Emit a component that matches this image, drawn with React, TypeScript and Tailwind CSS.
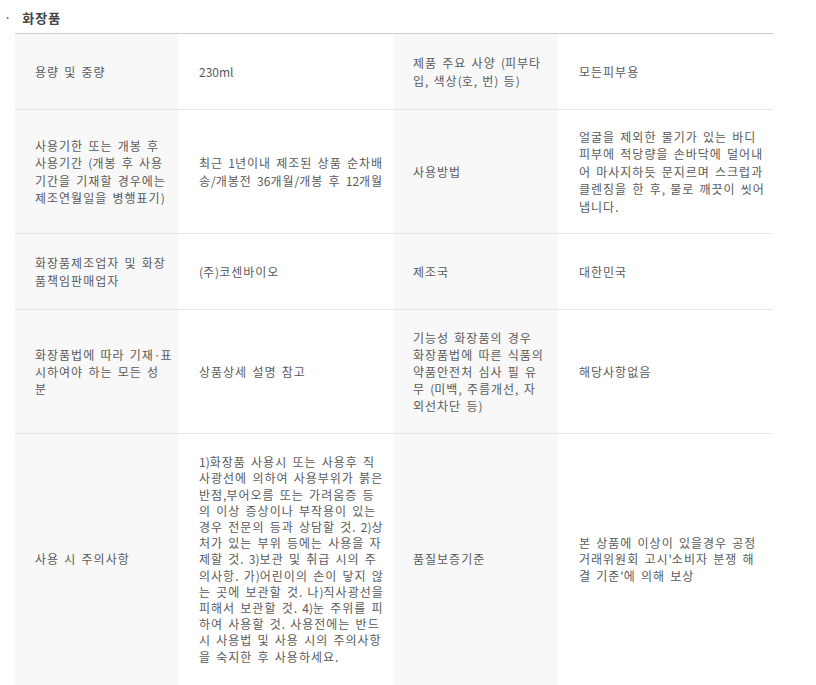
type Cell = { lines: string[] };

type Row = { h: string; lh: string; th1: string[]; td1: string[]; th2: string[]; td2: string[] };

const rows: Row[] = [
  {
    h: "h-[76px]",
    lh: "leading-[17.5px]",
    th1: ["용량 및 중량"],
    td1: ["230ml"],
    th2: ["제품 주요 사양 (피부타", "입, 색상(호, 번) 등)"],
    td2: ["모든피부용"],
  },
  {
    h: "h-[124px]",
    lh: "leading-[17.5px]",
    th1: ["사용기한 또는 개봉 후", "사용기간 (개봉 후 사용", "기간을 기재할 경우에는", "제조연월일을 병행표기)"],
    td1: ["최근 1년이내 제조된 상품 순차배", "송/개봉전 36개월/개봉 후 12개월"],
    th2: ["사용방법"],
    td2: [
      "얼굴을 제외한 물기가 있는 바디",
      "피부에 적당량을 손바닥에 덜어내",
      "어 마사지하듯 문지르며 스크럽과",
      "클렌징을 한 후, 물로 깨끗이 씻어",
      "냅니다.",
    ],
  },
  {
    h: "h-[76px]",
    lh: "leading-[17.5px]",
    th1: ["화장품제조업자 및 화장", "품책임판매업자"],
    td1: ["(주)코센바이오"],
    th2: ["제조국"],
    td2: ["대한민국"],
  },
  {
    h: "h-[124px]",
    lh: "leading-[17px]",
    th1: ["화장품법에 따라 기재·표", "시하여야 하는 모든 성", "분"],
    td1: ["상품상세 설명 참고"],
    th2: [
      "기능성 화장품의 경우",
      "화장품법에 따른 식품의",
      "약품안전처 심사 필 유",
      "무 (미백, 주름개선, 자",
      "외선차단 등)",
    ],
    td2: ["해당사항없음"],
  },
  {
    h: "h-[252px]",
    lh: "leading-[16.2px]",
    th1: ["사용 시 주의사항"],
    td1: [
      "1)화장품 사용시 또는 사용후 직",
      "사광선에 의하여 사용부위가 붉은",
      "반점,부어오름 또는 가려움증 등",
      "의 이상 증상이나 부작용이 있는",
      "경우 전문의 등과 상담할 것. 2)상",
      "처가 있는 부위 등에는 사용을 자",
      "제할 것. 3)보관 및 취급 시의 주",
      "의사항. 가)어린이의 손이 닿지 않",
      "는 곳에 보관할 것. 나)직사광선을",
      "피해서 보관할 것. 4)눈 주위를 피",
      "하여 사용할 것. 사용전에는 반드",
      "시 사용법 및 사용 시의 주의사항",
      "을 숙지한 후 사용하세요.",
    ],
    th2: ["품질보증기준"],
    td2: ["본 상품에 이상이 있을경우 공정", "거래위원회 고시'소비자 분쟁 해", "결 기준'에 의해 보상"],
  },
];

// hangul runs get 1px tracking so each syllable is 12px wide like the original
function Text({ text }: { text: string }) {
  const parts = text.split(/([가-힣]+)/);
  return (
    <>
      {parts.map((p, i) =>
        /[가-힣]/.test(p) ? (
          <span key={i} className="tracking-[1px]">
            {p}
          </span>
        ) : (
          <span key={i}>{p}</span>
        ),
      )}
    </>
  );
}

function Lines({ lines }: Cell) {
  return (
    <>
      {lines.map((l, i) => (
        <span key={i} className="block whitespace-nowrap">
          <Text text={l} />
        </span>
      ))}
    </>
  );
}

export default function App() {
  return (
    <div className="min-h-[685px] bg-white text-[12px] font-['Noto_Sans_CJK_KR','Noto_Sans',sans-serif] text-[#5a5a5a]">
      <div className="flex h-[33px] items-center pl-[4px] pt-[2px] text-[13px] font-bold text-[#444]">
        <span className="mr-[11px] font-normal">·</span>
        <span className="tracking-[1px]">화장품</span>
      </div>
      <table className="ml-[15px] w-[758px] table-fixed border-collapse border-t border-[#cdcdcd] [word-spacing:2.5px]">
        <colgroup>
          <col className="w-[163px]" />
          <col className="w-[215px]" />
          <col className="w-[165px]" />
          <col className="w-[215px]" />
        </colgroup>
        <tbody>
          {rows.map((r, i) => (
            <tr key={i} className={`${r.h} ${r.lh} border-b border-[#e6e6e6]`}>
              <th className="bg-[#f8f8f8] pl-[20px] pr-[4px] text-left align-middle font-normal">
                <Lines lines={r.th1} />
              </th>
              <td className="pl-[21px] pr-[4px] align-middle">
                <Lines lines={r.td1} />
              </td>
              <th className="bg-[#f8f8f8] pl-[20px] pr-[4px] text-left align-middle font-normal">
                <Lines lines={r.th2} />
              </th>
              <td className="pl-[21px] pr-[4px] align-middle">
                <Lines lines={r.td2} />
              </td>
            </tr>
          ))}
        </tbody>
      </table>
    </div>
  );
}
